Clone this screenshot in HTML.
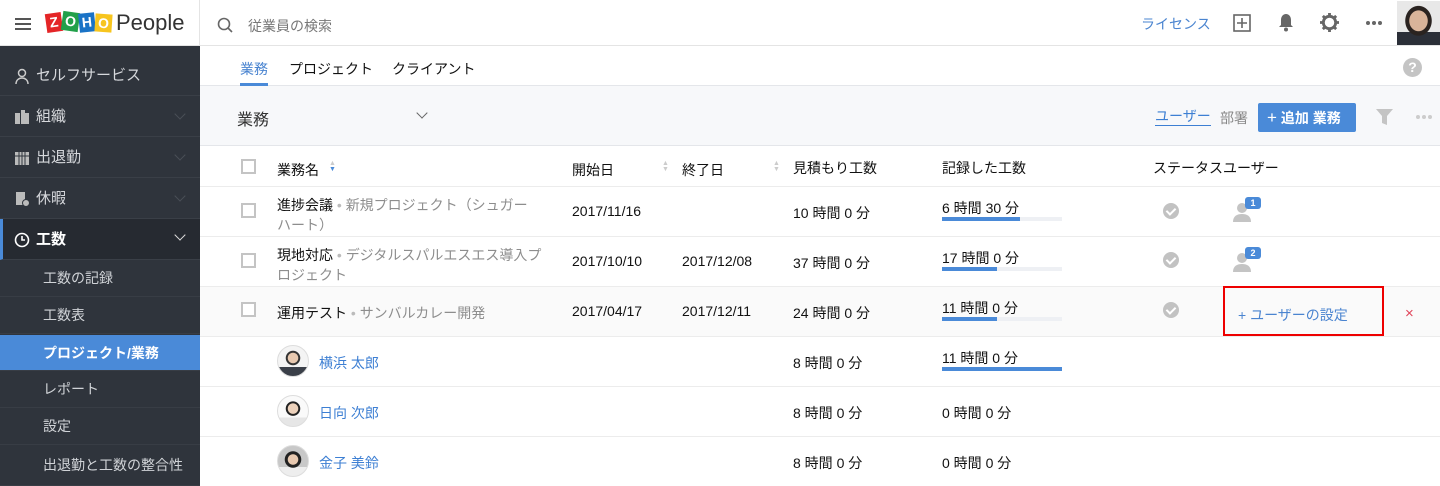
<!DOCTYPE html>
<html><head><meta charset="utf-8"><style>
*{margin:0;padding:0;box-sizing:border-box}
body{width:1440px;height:486px;overflow:hidden;position:relative;font-family:"Liberation Sans","Noto Sans CJK JP",sans-serif;font-size:14px;color:#111;background:#fff}
.a{position:absolute;white-space:nowrap}
.sb{position:absolute;left:0;top:46px;width:200px;height:440px;background:#2f343c}
.mi{position:absolute;left:0;width:200px;height:41px;border-bottom:1px solid #3a3f47;color:#d6d8dc;font-size:15px;line-height:41px;padding-left:36px}
.si{position:absolute;left:0;width:200px;height:37px;border-bottom:1px solid #383d45;color:#d0d3d7;font-size:14px;line-height:37px;padding-left:43px}
.chev{position:absolute;right:16px;top:14px;width:8px;height:8px;border-right:1.5px solid #4a4f57;border-bottom:1.5px solid #4a4f57;transform:rotate(45deg)}
.ic{position:absolute;left:14px;top:13px;width:16px;height:16px}
.hl{position:absolute;left:200px;width:1240px;height:1px;background:#ececec}
.cb{position:absolute;left:241px;width:15px;height:15px;border:2px solid #c4c4c4;background:#fff}
.g{color:#8d8d8d}
.bar{position:absolute;left:942px;width:120px;height:4px;background:#eef0f4}
.bar i{display:block;height:4px;background:#4a8ad8}
.chk{position:absolute;left:1163px;width:16px;height:16px;border-radius:50%;background:#c2c2c2}
.chk:after{content:"";position:absolute;left:5px;top:3px;width:4px;height:7px;border-right:2px solid #fff;border-bottom:2px solid #fff;transform:rotate(45deg)}
.av{position:absolute;left:277px;width:32px;height:32px;border-radius:50%;border:1px solid #ddd;background:radial-gradient(circle at 50% 40%,#e8c9b0 0 5px,#333 5.5px 7px,transparent 7.5px),linear-gradient(#f4f4f4 70%,#3a3f48 70%)}
.usr{position:absolute;left:1233px;width:18px;height:20px}
.badge{position:absolute;left:1245px;width:16px;height:12px;border-radius:3px;background:#4a8ad8;color:#fff;font-size:9px;font-weight:bold;text-align:center;line-height:12px}
.blue{color:#3d7fd3}
</style></head><body>
<div class="a" style="left:0;top:0;width:1440px;height:46px;border-bottom:1px solid #e4e4e4"></div>
<div class="a" style="left:199px;top:0;width:1px;height:46px;background:#e4e4e4"></div>
<div class="a" style="left:15px;top:18px;width:16px;height:2px;background:#555;box-shadow:0 5px 0 #555,0 10px 0 #555"></div>
<div class="a" style="left:46px;top:12px;width:66px;height:22px">
<span class="a" style="left:0;top:1px;width:16px;height:19px;background:#e42527;transform:rotate(-8deg);color:#fff;font:bold 14px/19px 'Liberation Sans';text-align:center">Z</span>
<span class="a" style="left:16px;top:0;width:17px;height:19px;background:#22a04a;transform:rotate(8deg);color:#fff;font:bold 14px/19px 'Liberation Sans';text-align:center">O</span>
<span class="a" style="left:33px;top:1px;width:16px;height:19px;background:#1a73c6;transform:rotate(-6deg);color:#fff;font:bold 14px/19px 'Liberation Sans';text-align:center">H</span>
<span class="a" style="left:49px;top:2px;width:17px;height:18px;background:#f7c51e;transform:rotate(4deg);color:#fff;font:bold 14px/18px 'Liberation Sans';text-align:center">O</span>
</div>
<div class="a" style="left:116px;top:10px;font-size:22px;color:#333">People</div>
<svg class="a" style="left:217px;top:17px" width="16" height="16" viewBox="0 0 16 16"><circle cx="7" cy="7" r="5.5" fill="none" stroke="#666" stroke-width="1.6"/><path d="M11 11l4 4" stroke="#666" stroke-width="1.6"/></svg>
<div class="a" style="left:248px;top:16px;font-size:14px;color:#777">従業員の検索</div>
<div class="a" style="left:1141px;top:14px;font-size:14px;color:#4a84d0">ライセンス</div>
<svg class="a" style="left:1233px;top:14px" width="18" height="18" viewBox="0 0 18 18"><rect x="1" y="1" width="16" height="16" fill="none" stroke="#666" stroke-width="1.6"/><path d="M9 4v10M4 9h10" stroke="#666" stroke-width="1.6"/></svg>
<svg class="a" style="left:1277px;top:13px" width="18" height="19" viewBox="0 0 18 19"><path d="M9 1c-3 0-5 2.5-5 6v5l-2 2h14l-2-2V7c0-3.5-2-6-5-6z" fill="#666"/><circle cx="9" cy="16.5" r="2" fill="#666"/></svg>
<svg class="a" style="left:1320px;top:13px" width="19" height="19" viewBox="0 0 20 20"><circle cx="10" cy="10" r="6.5" fill="none" stroke="#666" stroke-width="3"/><path d="M10 0v4M10 16v4M0 10h4M16 10h4M3 3l3 3M14 14l3 3M17 3l-3 3M6 14l-3 3" stroke="#666" stroke-width="3"/></svg>
<div class="a" style="left:1366px;top:21px;width:4px;height:4px;border-radius:50%;background:#666;box-shadow:6px 0 0 #666,12px 0 0 #666"></div>
<div class="a" style="left:1397px;top:1px;width:43px;height:44px;background:radial-gradient(ellipse at 50% 45%,#d9b49a 0 9px,#2a2320 9.5px 13px,transparent 13.5px),linear-gradient(#e8e8e8 70%,#2b2f38 70%)"></div>
<div class="sb"></div>
<div class="mi" style="top:55px"><svg class="ic" viewBox="0 0 16 16"><circle cx="8" cy="5" r="3.5" fill="none" stroke="#ccc" stroke-width="1.5"/><path d="M2 16c0-4 3-6 6-6s6 2 6 6" fill="none" stroke="#ccc" stroke-width="1.5"/></svg>セルフサービス</div>
<div class="mi" style="top:96px"><svg class="ic" viewBox="0 0 16 16"><path d="M1 15V4h5v11M7 15V1h4v3h4v11z" fill="#bbb"/></svg>組織<span class="chev"></span></div>
<div class="mi" style="top:137px"><svg class="ic" viewBox="0 0 16 16"><rect x="1" y="2" width="14" height="13" fill="#bbb"/><path d="M1 6h14M5 2v13M8 2v13M11 2v13" stroke="#2f343c" stroke-width="1"/></svg>出退勤<span class="chev"></span></div>
<div class="mi" style="top:178px"><svg class="ic" viewBox="0 0 16 16"><rect x="2" y="1" width="9" height="13" fill="#bbb"/><circle cx="12" cy="12" r="3.5" fill="#bbb" stroke="#2f343c"/></svg>休暇<span class="chev"></span></div>
<div class="mi" style="top:219px;background:#262a31;color:#fff;font-weight:bold;border-left:3px solid #4a8ad8;padding-left:33px"><svg class="ic" style="left:11px" viewBox="0 0 16 16"><circle cx="8" cy="8" r="6.5" fill="none" stroke="#fff" stroke-width="1.6"/><path d="M8 4v4h3" fill="none" stroke="#fff" stroke-width="1.6"/></svg>工数<span class="chev" style="border-color:#ddd;top:12px"></span></div>
<div class="si" style="top:260px">工数の記録</div>
<div class="si" style="top:297px">工数表</div>
<div class="si" style="top:335px;height:36px;background:#4a8ad8;color:#fff;font-weight:bold;line-height:36px">プロジェクト/業務</div>
<div class="si" style="top:371px">レポート</div>
<div class="si" style="top:408px">設定</div>
<div class="si" style="top:445px;height:41px;line-height:41px">出退勤と工数の整合性</div>
<div class="a" style="left:200px;top:85px;width:1240px;height:1px;background:#e4e6ea"></div>
<div class="a" style="left:240px;top:59px;color:#4a84d0;font-size:14px">業務</div>
<div class="a" style="left:240px;top:83px;width:28px;height:3px;background:#4a8ad8"></div>
<div class="a" style="left:289px;top:59px">プロジェクト</div>
<div class="a" style="left:392px;top:59px">クライアント</div>
<div class="a" style="left:1403px;top:58px;width:19px;height:19px;border-radius:50%;background:#c4c4c4;color:#fff;font:bold 14px/19px 'Liberation Sans';text-align:center">?</div>
<div class="a" style="left:200px;top:86px;width:1240px;height:60px;background:#f7f8fa;border-bottom:1px solid #e4e6ea"></div>
<div class="a" style="left:237px;top:106px;font-size:16px;color:#333">業務</div>
<div class="a" style="left:418px;top:109px;width:8px;height:8px;border-right:1.5px solid #666;border-bottom:1.5px solid #666;transform:rotate(45deg)"></div>
<div class="a" style="left:1155px;top:108px;color:#3d7fd3;border-bottom:1.5px solid #3d7fd3;line-height:17px">ユーザー</div>
<div class="a" style="left:1220px;top:108px;color:#888">部署</div>
<div class="a" style="left:1258px;top:103px;width:98px;height:29px;background:#4a8ad8;border-radius:2px;color:#fff;font-weight:bold;line-height:29px;padding-left:9px"><span style="font-weight:normal;font-size:17px">+</span> 追加 業務</div>
<svg class="a" style="left:1376px;top:109px" width="17" height="17" viewBox="0 0 17 17"><path d="M0 0h17l-6 7v9l-5-2V7z" fill="#c4c4c4"/></svg>
<div class="a" style="left:1416px;top:115px;width:4px;height:4px;border-radius:50%;background:#ccc;box-shadow:6px 0 0 #ccc,12px 0 0 #ccc"></div>
<div class="cb" style="top:159px"></div>
<div class="a" style="left:277px;top:160px">業務名</div>
<div class="a" style="left:329px;top:161px;font-size:7px;line-height:6px;color:#ccc">▲<br><span style="color:#4a8ad8">▼</span></div>
<div class="a" style="left:572px;top:160px">開始日</div>
<div class="a" style="left:662px;top:161px;font-size:7px;line-height:6px;color:#ccc">▲<br>▼</div>
<div class="a" style="left:682px;top:160px">終了日</div>
<div class="a" style="left:773px;top:161px;font-size:7px;line-height:6px;color:#ccc">▲<br>▼</div>
<div class="a" style="left:793px;top:158px">見積もり工数</div>
<div class="a" style="left:942px;top:158px">記録した工数</div>
<div class="a" style="left:1153px;top:158px">ステータスユーザー</div>
<div class="hl" style="top:186px"></div>
<div class="cb" style="top:203px"></div>
<div class="a" style="left:277px;top:195px;line-height:20px">進捗会議 <span style="color:#bbb">•</span> <span class="g">新規プロジェクト（シュガー<br>ハート）</span></div>
<div class="a" style="left:572px;top:203px">2017/11/16</div>
<div class="a" style="left:793px;top:203px">10 時間 0 分</div>
<div class="a" style="left:942px;top:198px">6 時間 30 分</div>
<div class="bar" style="top:217px"><i style="width:78px"></i></div>
<div class="chk" style="top:203px"></div>
<svg class="usr" style="top:202px" viewBox="0 0 18 20"><circle cx="9" cy="6" r="5" fill="#c4c4c4"/><path d="M0 20c0-6 4-8 9-8s9 2 9 8z" fill="#c4c4c4"/></svg>
<div class="badge" style="top:197px">1</div>
<div class="hl" style="top:236px"></div>
<div class="cb" style="top:253px"></div>
<div class="a" style="left:277px;top:245px;line-height:20px">現地対応 <span style="color:#bbb">•</span> <span class="g">デジタルスパルエスエス導入プ<br>ロジェクト</span></div>
<div class="a" style="left:572px;top:253px">2017/10/10</div>
<div class="a" style="left:682px;top:253px">2017/12/08</div>
<div class="a" style="left:793px;top:253px">37 時間 0 分</div>
<div class="a" style="left:942px;top:248px">17 時間 0 分</div>
<div class="bar" style="top:267px"><i style="width:55px"></i></div>
<div class="chk" style="top:252px"></div>
<svg class="usr" style="top:252px" viewBox="0 0 18 20"><circle cx="9" cy="6" r="5" fill="#c4c4c4"/><path d="M0 20c0-6 4-8 9-8s9 2 9 8z" fill="#c4c4c4"/></svg>
<div class="badge" style="top:247px">2</div>
<div class="hl" style="top:286px"></div>
<div class="a" style="left:200px;top:287px;width:1240px;height:49px;background:#fafafa"></div>
<div class="cb" style="top:302px"></div>
<div class="a" style="left:277px;top:303px">運用テスト <span style="color:#bbb">•</span> <span class="g">サンバルカレー開発</span></div>
<div class="a" style="left:572px;top:303px">2017/04/17</div>
<div class="a" style="left:682px;top:303px">2017/12/11</div>
<div class="a" style="left:793px;top:303px">24 時間 0 分</div>
<div class="a" style="left:942px;top:298px">11 時間 0 分</div>
<div class="bar" style="top:317px"><i style="width:55px"></i></div>
<div class="chk" style="top:302px"></div>
<div class="a" style="left:1223px;top:286px;width:161px;height:50px;border:2px solid #e00"></div>
<div class="a" style="left:1238px;top:305px;color:#4a84d0">+ ユーザーの設定</div>
<div class="a" style="left:1405px;top:305px;color:#e0455a;font-size:15px">×</div>
<div class="hl" style="top:336px"></div>
<div class="av" style="top:345px"></div>
<div class="a blue" style="left:319px;top:353px">横浜 太郎</div>
<div class="a" style="left:793px;top:353px">8 時間 0 分</div>
<div class="a" style="left:942px;top:348px">11 時間 0 分</div>
<div class="bar" style="top:367px"><i style="width:120px"></i></div>
<div class="hl" style="top:386px"></div>
<div class="av" style="top:395px;background:radial-gradient(circle at 50% 42%,#edd2bc 0 5px,#222 5.5px 7px,transparent 7.5px),linear-gradient(#fafafa 72%,#e6e6e6 72%)"></div>
<div class="a blue" style="left:319px;top:403px">日向 次郎</div>
<div class="a" style="left:793px;top:403px">8 時間 0 分</div>
<div class="a" style="left:942px;top:403px">0 時間 0 分</div>
<div class="hl" style="top:436px"></div>
<div class="av" style="top:445px;background:radial-gradient(circle at 50% 45%,#e8c9b0 0 5px,#222 5.5px 8px,transparent 8.5px),linear-gradient(#c8c8c8 70%,#eee 70%)"></div>
<div class="a blue" style="left:319px;top:453px">金子 美鈴</div>
<div class="a" style="left:793px;top:453px">8 時間 0 分</div>
<div class="a" style="left:942px;top:453px">0 時間 0 分</div>
</body></html>
